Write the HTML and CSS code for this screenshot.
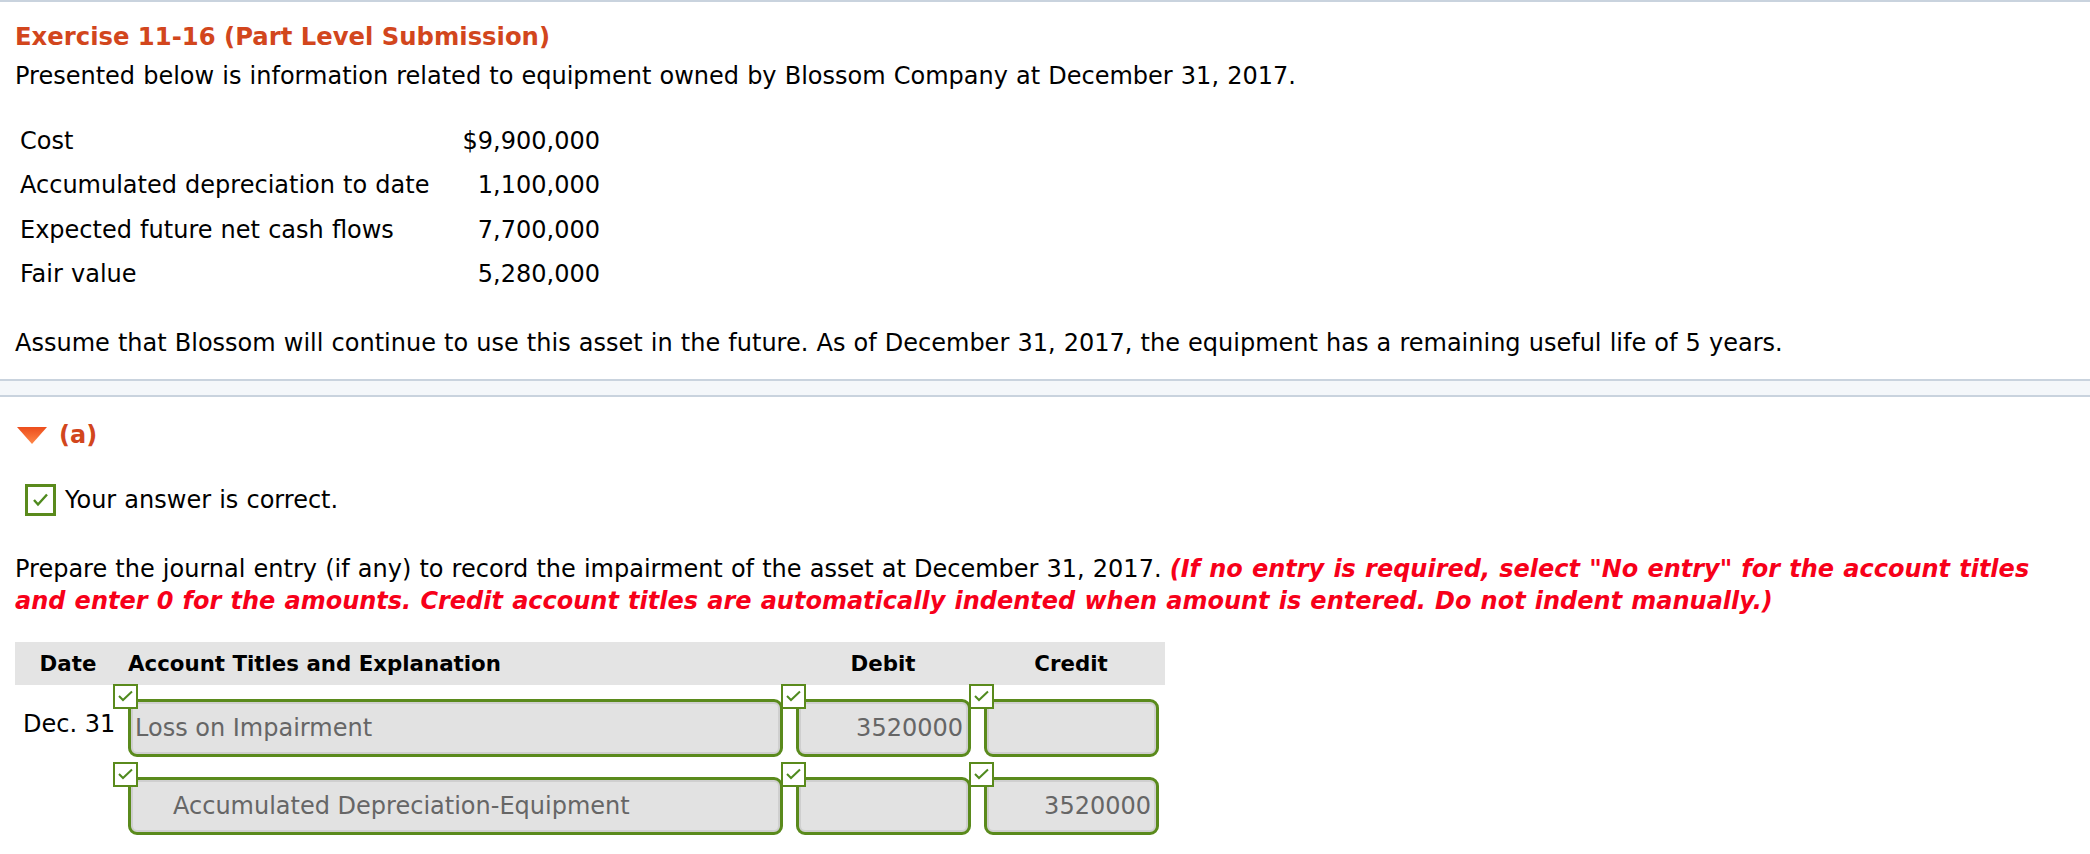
FILE: index.html
```html
<!DOCTYPE html>
<html lang="en">
<head>
<meta charset="utf-8">
<title>Exercise 11-16</title>
<link rel="stylesheet" href="styles.css">
</head>
<body>
<div class="top-rule"></div>
<section class="intro">
  <h1 class="title">Exercise 11-16 (Part Level Submission)</h1>
  <p class="lead">Presented below is information related to equipment owned by Blossom Company at December 31, 2017.</p>
  <div class="facts">
    <div class="fact-label">Cost</div><div class="fact-value">$9,900,000</div>
    <div class="fact-label">Accumulated depreciation to date</div><div class="fact-value">1,100,000</div>
    <div class="fact-label">Expected future net cash flows</div><div class="fact-value">7,700,000</div>
    <div class="fact-label">Fair value</div><div class="fact-value">5,280,000</div>
  </div>
  <p class="lead assume">Assume that Blossom will continue to use this asset in the future. As of December 31, 2017, the equipment has a remaining useful life of 5 years.</p>
</section>
<div class="band"></div>
<section class="part">
  <div class="part-head">
    <svg class="caret" width="30" height="17" viewBox="0 0 30 17"><defs><linearGradient id="cg" x1="0" y1="0" x2="0" y2="1"><stop offset="0" stop-color="#ec4d1c"/><stop offset="1" stop-color="#ff8748"/></linearGradient></defs><polygon points="0,0 30,0 15,17" fill="url(#cg)"/></svg>
    <span class="part-label">(a)</span>
  </div>
  <div class="status">
    <span class="check-lg"><svg width="25" height="26" viewBox="0 0 25 26"><polyline points="6,13 10,17.5 19,7.5" fill="none" stroke="#4f8a1e" stroke-width="2.4"/></svg></span>
    <span class="status-text">Your answer is correct.</span>
  </div>
  <p class="lead prompt"><span>Prepare the journal entry (if any) to record the impairment of the asset at December 31, 2017.</span> <em class="note">(If no entry is required, select "No entry" for the account titles</em><br><em class="note">and enter 0 for the amounts. Credit account titles are automatically indented when amount is entered. Do not indent manually.)</em></p>
  <div class="journal">
    <div class="jhead">
      <div class="h-date">Date</div>
      <div class="h-acct">Account Titles and Explanation</div>
      <div class="h-num">Debit</div>
      <div class="h-num">Credit</div>
    </div>
    <div class="jrow first">
      <div class="date-text">Dec. 31</div>
      <div class="cell"><span class="mini-check"><svg width="21" height="21" viewBox="0 0 21 21"><polyline points="4,10 8,14 17,5.5" fill="none" stroke="#4f8a1e" stroke-width="2"/></svg></span><div class="field">Loss on Impairment</div></div>
      <div class="cell"><span class="mini-check"><svg width="21" height="21" viewBox="0 0 21 21"><polyline points="4,10 8,14 17,5.5" fill="none" stroke="#4f8a1e" stroke-width="2"/></svg></span><div class="field num">3520000</div></div>
      <div class="cell"><span class="mini-check"><svg width="21" height="21" viewBox="0 0 21 21"><polyline points="4,10 8,14 17,5.5" fill="none" stroke="#4f8a1e" stroke-width="2"/></svg></span><div class="field num"></div></div>
    </div>
    <div class="jrow">
      <div class="date-text"></div>
      <div class="cell"><span class="mini-check"><svg width="21" height="21" viewBox="0 0 21 21"><polyline points="4,10 8,14 17,5.5" fill="none" stroke="#4f8a1e" stroke-width="2"/></svg></span><div class="field indent">Accumulated Depreciation-Equipment</div></div>
      <div class="cell"><span class="mini-check"><svg width="21" height="21" viewBox="0 0 21 21"><polyline points="4,10 8,14 17,5.5" fill="none" stroke="#4f8a1e" stroke-width="2"/></svg></span><div class="field num"></div></div>
      <div class="cell"><span class="mini-check"><svg width="21" height="21" viewBox="0 0 21 21"><polyline points="4,10 8,14 17,5.5" fill="none" stroke="#4f8a1e" stroke-width="2"/></svg></span><div class="field num">3520000</div></div>
    </div>
  </div>
</section>
</body>
</html>
```
FILE: styles.css
```css
* { box-sizing: border-box; }

body {
  margin: 0;
  background: #fff;
  color: #000;
  font-family: "DejaVu Sans", Verdana, sans-serif;
}

.top-rule {
  height: 2px;
  background: #c9d3de;
}

.intro,
.part {
  padding: 0 15px;
}

.title {
  margin: 19px 0 0;
  font-size: 24.3px;
  line-height: 32px;
  font-weight: bold;
  color: #d2461d;
}

.lead {
  margin: 7px 0 0;
  font-size: 24px;
  line-height: 32px;
  word-spacing: 0.5px;
}

.facts {
  display: grid;
  grid-template-columns: 420px 160px;
  margin-top: 26.5px;
  padding-left: 5px;
  font-size: 24px;
  line-height: 44.5px;
  word-spacing: 0.5px;
}

.fact-value {
  text-align: right;
}

.assume {
  margin-top: 30.5px;
}

.band {
  margin-top: 20px;
  height: 18px;
  background: #f4f7fa;
  border-top: 2px solid #c9d3de;
  border-bottom: 2px solid #c9d3de;
}

.part-head {
  display: flex;
  align-items: center;
  gap: 12px;
  height: 32px;
  margin-top: 22px;
  padding-left: 2px;
}

.caret {
  display: block;
}

.part-label {
  font-size: 24px;
  line-height: 32px;
  font-weight: bold;
  color: #d2461d;
}

.status {
  display: flex;
  align-items: center;
  gap: 9px;
  height: 32px;
  margin-top: 33px;
  padding-left: 10px;
}

.check-lg {
  display: block;
  width: 31px;
  height: 32px;
  border: 3px solid #5a8a1c;
  background: #fff;
}

.check-lg svg {
  display: block;
}

.status-text {
  font-size: 24px;
  line-height: 32px;
  word-spacing: 0.5px;
}

.prompt {
  margin-top: 37px;
}

.note {
  color: #f70019;
  font-weight: bold;
  font-style: italic;
  word-spacing: 0.8px;
}

.journal {
  margin-top: 25px;
  width: 1150px;
}

.jhead,
.jrow {
  display: grid;
  grid-template-columns: 106px 668px 188px 188px;
}

.jhead {
  height: 43px;
  align-items: center;
  background: #e4e4e4;
  font-size: 21.33px;
  font-weight: bold;
}

.h-date,
.h-num {
  text-align: center;
}

.h-acct {
  padding-left: 7px;
}

.jrow {
  margin-top: 5px;
}

.jrow.first {
  margin-top: -1px;
}

.date-text {
  padding: 24px 0 0 8px;
  font-size: 24px;
  line-height: 32px;
}

.cell {
  position: relative;
  padding: 15px 6px 0 7px;
}

.mini-check {
  position: absolute;
  top: 0;
  left: -8px;
  z-index: 1;
  width: 25px;
  height: 25px;
  border: 2px solid #5a8a1c;
  background: #fff;
}

.mini-check svg {
  display: block;
}

.field {
  height: 58px;
  padding: 0 5px 0 4px;
  border: 3px solid #5a8a1c;
  border-radius: 9px;
  background: #e2e2e2;
  box-shadow: inset 0 0 0 2px #cfcfcf;
  color: #666;
  font-size: 24px;
  line-height: 52px;
  white-space: nowrap;
  overflow: hidden;
}

.field.num {
  text-align: right;
}

.field.indent {
  padding-left: 42px;
}
```
